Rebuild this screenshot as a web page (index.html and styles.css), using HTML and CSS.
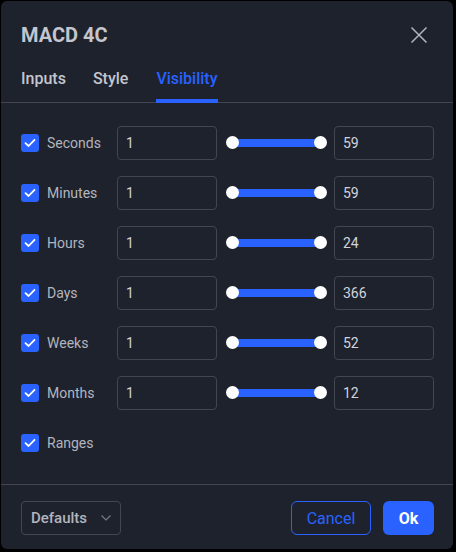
FILE: index.html
```html
<!DOCTYPE html>
<html lang="en">
<head>
    <meta charset="UTF-8">
    <meta name="viewport" content="width=device-width, initial-scale=1.0">
    <title>MACD 4C - Visibility</title>
    <link rel="stylesheet" href="styles.css">
</head>
<body>
    <div class="dialog">
        <div class="header">
            <div class="title-row">
                <span class="title">MACD 4C</span>
                <button class="close" aria-label="Close">
                    <svg width="18" height="18" viewBox="0 0 18 18">
                        <path d="M1.5 1.5 L16.5 16.5 M16.5 1.5 L1.5 16.5" stroke="#b2b5be" stroke-width="1.5" fill="none"/>
                    </svg>
                </button>
            </div>
            <div class="tabs">
                <span class="tab">Inputs</span>
                <span class="tab">Style</span>
                <span class="tab active">Visibility</span>
            </div>
        </div>

        <div class="content" id="rows"></div>

        <div class="footer">
            <div class="select">
                <span>Defaults</span>
                <svg width="10" height="6" viewBox="0 0 10 6">
                    <path d="M0.5 0.5 L5 5 L9.5 0.5" stroke="#787b86" stroke-width="1.2" fill="none"/>
                </svg>
            </div>
            <div class="actions">
                <button class="btn cancel">Cancel</button>
                <button class="btn ok">Ok</button>
            </div>
        </div>
    </div>

<script>
    const intervals = [
        ['Seconds', 1, 59],
        ['Minutes', 1, 59],
        ['Hours', 1, 24],
        ['Days', 1, 366],
        ['Weeks', 1, 52],
        ['Months', 1, 12],
        ['Ranges']
    ];

    const check = `<svg width="12" height="10" viewBox="0 0 12 10"><path d="M1.5 5.2 L4.6 8 L10.5 1.8" stroke="#fff" stroke-width="1.8" fill="none" stroke-linecap="round" stroke-linejoin="round"/></svg>`;

    const rows = document.getElementById("rows");
    for (let [name, from, to] of intervals) {
        let row = document.createElement("div");
        row.classList.add("row");
        let html = `<label class="check"><span class="box">${check}</span><span class="label">${name}</span></label>`;
        if (from !== undefined) {
            html += `<div class="field">${from}</div>
                <div class="slider"><div class="track"></div><span class="knob"></span><span class="knob"></span></div>
                <div class="field">${to}</div>`;
        }
        row.innerHTML = html;
        rows.appendChild(row);
    }
</script>
</body>
</html>
```

FILE: styles.css
```css
body {
    margin: 0;
    padding: 1px;
    background: #000;
    font-family: Roboto, "Noto Sans", sans-serif;
}
.dialog {
    width: 452px;
    height: 548px;
    background: #1e222d;
    border-radius: 6px;
    display: flex;
    flex-direction: column;
}
.header {
    padding: 20px 20px 0;
    border-bottom: 1px solid #434651;
}
.title-row {
    display: flex;
    justify-content: space-between;
    align-items: center;
    height: 28px;
}
.title {
    font-size: 20px;
    font-weight: 700;
    color: #c3c6ce;
}
.close {
    background: none;
    border: none;
    padding: 0;
    width: 18px;
    height: 18px;
    margin-right: 5px;
    cursor: pointer;
}
.tabs {
    display: flex;
    gap: 27px;
    margin-top: 11px;
}
.tab {
    position: relative;
    font-size: 16px;
    font-weight: 500;
    line-height: 24px;
    padding: 7px 0 11px;
    color: #c3c6ce;
}
.tab.active {
    color: #2962ff;
    margin-left: 1px;
}
.tab.active::after {
    content: "";
    position: absolute;
    left: 0;
    right: 0;
    bottom: -1px;
    height: 4px;
    background: #2962ff;
}
.content {
    flex: 1;
    padding: 15px 19px 0 20px;
}
.row {
    display: flex;
    align-items: center;
    height: 50px;
}
.check {
    display: flex;
    align-items: center;
    gap: 8px;
    width: 96px;
    flex-shrink: 0;
}
.box {
    width: 18px;
    height: 18px;
    border-radius: 3px;
    background: #2962ff;
    display: flex;
    align-items: center;
    justify-content: center;
}
.label {
    font-size: 14px;
    color: #b2b5be;
}
.field {
    box-sizing: border-box;
    width: 100px;
    height: 34px;
    flex-shrink: 0;
    border: 1px solid #434651;
    border-radius: 4px;
    padding-left: 8px;
    display: flex;
    align-items: center;
    font-size: 14px;
    color: #d1d4dc;
}
.slider {
    position: relative;
    width: 117px;
    height: 34px;
    flex-shrink: 0;
}
.track {
    position: absolute;
    left: 15px;
    right: 13px;
    top: 13px;
    height: 8px;
    background: #2962ff;
}
.knob {
    position: absolute;
    top: 10px;
    left: 9px;
    width: 13px;
    height: 13px;
    border-radius: 50%;
    background: #fff;
}
.knob + .knob {
    left: 97px;
}
.footer {
    display: flex;
    justify-content: space-between;
    align-items: center;
    border-top: 1px solid #434651;
    padding: 16px 19px 14px 20px;
}
.select {
    box-sizing: border-box;
    width: 100px;
    height: 34px;
    border: 1px solid #434651;
    border-radius: 4px;
    display: flex;
    align-items: center;
    justify-content: space-between;
    padding: 0 9px 0 9px;
    font-size: 15px;
    font-weight: 500;
    color: #b2b5be;
}
.actions {
    display: flex;
    gap: 12px;
}
.btn {
    height: 34px;
    border-radius: 6px;
    font-family: inherit;
    font-size: 16px;
    cursor: pointer;
}
.cancel {
    width: 80px;
    background: none;
    border: 1px solid #2962ff;
    color: #2962ff;
}
.ok {
    width: 51px;
    background: #2962ff;
    border: none;
    color: #fff;
    font-weight: 700;
}
```
